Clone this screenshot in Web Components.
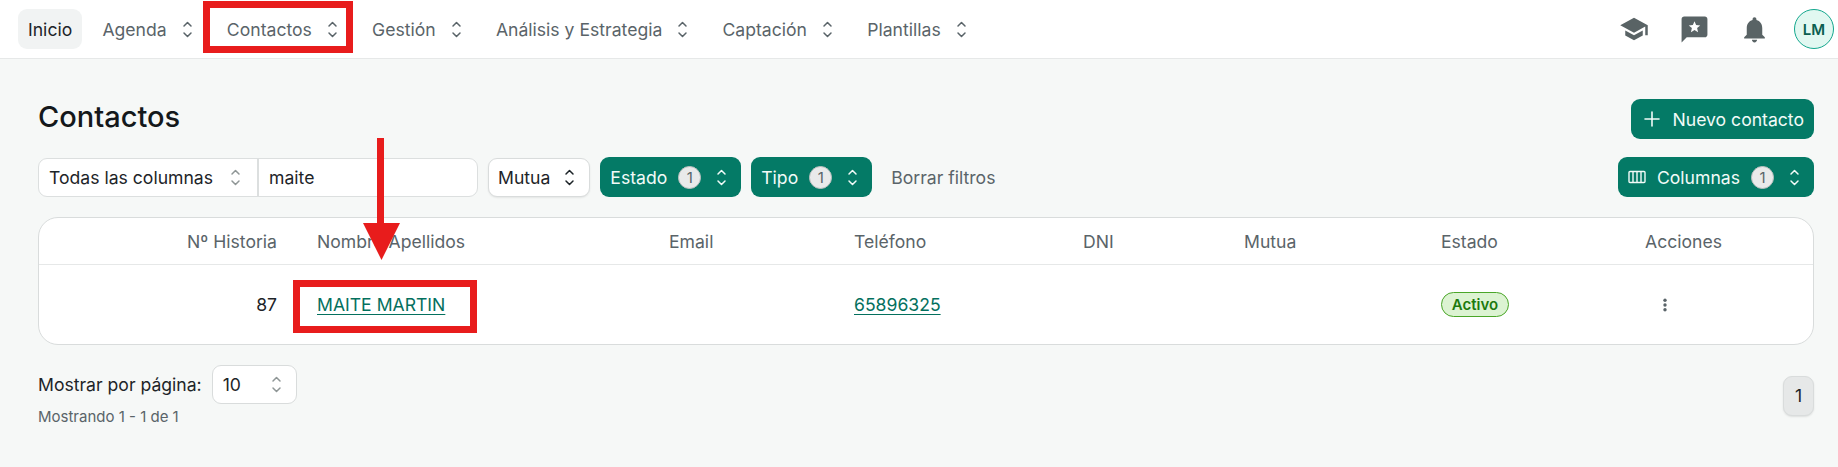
<!DOCTYPE html>
<html lang="es">
<head>
<meta charset="utf-8">
<title>Contactos</title>
<style>
  html, body { margin: 0; height: 100%; }
  body {
    background: #f6f8f7;
    font-family: Inter, "Liberation Sans", sans-serif;
    font-size: 17.6px;
    color: #1d2428;
    position: relative;
    overflow: hidden;
  }
</style>
</head>
<body>
<top-nav></top-nav>
<contacts-page></contacts-page>
<red-marks></red-marks>

<script>
const selector = `<svg class="sel" width="19" height="19" viewBox="0 0 19 19" fill="none" stroke="currentColor" stroke-width="1.5" stroke-linecap="round" stroke-linejoin="round"><path d="M6 6l3.5-3.5L13 6"/><path d="M6 13l3.5 3.5L13 13"/></svg>`

class NavItem extends HTMLElement {
  constructor() {
    super()
    this.shadow = this.attachShadow({ mode: 'open' })
  }
  connectedCallback() {
    const menu = this.hasAttribute('menu')
    this.shadow.innerHTML = /*html*/`
      <style>
        :host {
          display: flex;
          align-items: center;
          height: 40px;
          padding: 0 10px;
          gap: 11px;
          border-radius: 9px;
          color: #5a6469;
          white-space: nowrap;
        }
        :host([active]) { background: #f1f3f3; color: #1d2428; }
        svg { display: block; margin-right: 0; }
      </style>
      <slot></slot>${menu ? selector : ''}`
  }
}
customElements.define('nav-item', NavItem)

class TopNav extends HTMLElement {
  constructor() {
    super()
    this.shadow = this.attachShadow({ mode: 'open' })
  }
  connectedCallback() {
    this.shadow.innerHTML = /*html*/`
      <style>
        :host {
          display: flex;
          align-items: center;
          justify-content: space-between;
          height: 58px;
          padding: 0 4px 0 18px;
          background: #fff;
          border-bottom: 1px solid #e6e8e8;
        }
        .links { display: flex; align-items: center; gap: 10.2px; }
        .tools { display: flex; align-items: center; gap: 20px; }
        .tool {
          width: 40px;
          height: 40px;
          display: flex;
          align-items: center;
          justify-content: center;
          color: #596365;
        }
        .avatar {
          box-sizing: border-box;
          width: 40px;
          height: 40px;
          border-radius: 50%;
          border: 1px solid #12a78d;
          background: #e1f8f1;
          color: #0b5e50;
          font-size: 15px;
          font-weight: 600;
          display: flex;
          align-items: center;
          justify-content: center;
        }
      </style>
      <div class="links">
        <nav-item active>Inicio</nav-item>
        <nav-item menu>Agenda</nav-item>
        <nav-item menu>Contactos</nav-item>
        <nav-item menu>Gestión</nav-item>
        <nav-item menu>Análisis y Estrategia</nav-item>
        <nav-item menu>Captación</nav-item>
        <nav-item menu>Plantillas</nav-item>
      </div>
      <div class="tools">
        <div class="tool"><svg width="30" height="30" viewBox="0 0 24 24" fill="currentColor"><path d="M5 13.18v4L12 21l7-3.82v-4L12 17l-7-3.82zM12 3L1 9l11 6 9-4.91V17h2V9L12 3z"/></svg></div>
        <div class="tool"><svg width="31" height="31" viewBox="0 0 24 24" fill="currentColor"><path d="M20 2H4c-1.1 0-2 .9-2 2v18l4-4h14c1.1 0 2-.9 2-2V4c0-1.1-.9-2-2-2z"/><path fill="#fff" d="M12 5.6l1.25 2.95 3.2.27-2.43 2.1.73 3.13L12 12.4l-2.75 1.65.73-3.13-2.43-2.1 3.2-.27z"/></svg></div>
        <div class="tool"><svg width="31" height="31" viewBox="0 0 24 24" fill="currentColor"><path d="M12 22c1.1 0 2-.9 2-2h-4c0 1.1.9 2 2 2zm6-6v-5c0-3.07-1.63-5.64-4.5-6.32V4c0-.83-.67-1.5-1.5-1.5s-1.5.67-1.5 1.5v.68C7.64 5.36 6 7.92 6 11v5l-2 2v1h16v-1l-2-2z"/></svg></div>
        <div class="avatar">LM</div>
      </div>`
  }
}
customElements.define('top-nav', TopNav)

// filter button, white or green with the count pill
class FilterButton extends HTMLElement {
  constructor() {
    super()
    this.shadow = this.attachShadow({ mode: 'open' })
  }
  connectedCallback() {
    const count = this.getAttribute('count')
    this.shadow.innerHTML = /*html*/`
      <style>
        :host {
          box-sizing: border-box;
          display: flex;
          align-items: center;
          height: 40px;
          padding: 0 10px;
          gap: 11px;
          border-radius: 9px;
          background: #047a66;
          color: #f2fbf8;
          white-space: nowrap;
        }
        :host([plain]) {
          background: #fff;
          color: #1d2428;
          height: 39px;
          padding: 0 10px 0 9px;
          gap: 10px;
          border: 1px solid #d9dcdc;
          box-shadow: 0 1px 2px rgba(0,0,0,.08);
        }
        .count {
          width: 23px;
          height: 23px;
          border-radius: 50%;
          background: #e9eaea;
          border: 1px solid #bdbfbf;
          box-sizing: border-box;
          color: #5a6469;
          font-size: 15px;
          display: flex;
          align-items: center;
          justify-content: center;
        }
        svg { display: block; }
      </style>
      <slot></slot>
      ${count ? `<span class="count">${count}</span>` : ''}
      ${selector}`
  }
}
customElements.define('filter-button', FilterButton)

class SearchBox extends HTMLElement {
  constructor() {
    super()
    this.shadow = this.attachShadow({ mode: 'open' })
  }
  connectedCallback() {
    this.shadow.innerHTML = /*html*/`
      <style>
        :host {
          box-sizing: border-box;
          display: flex;
          width: 440px;
          height: 39px;
          background: #fff;
          border: 1px solid #dcdfdf;
          border-radius: 9px;
        }
        .col {
          box-sizing: border-box;
          width: 220px;
          display: flex;
          align-items: center;
          justify-content: space-between;
          padding: 0 12px 0 10px;
          border-right: 2px solid #dcdfdf;
          white-space: nowrap;
        }
        .col svg { color: #8f9696; display: block; }
        .val { display: flex; align-items: center; padding-left: 10px; }
      </style>
      <div class="col">Todas las columnas ${selector}</div>
      <div class="val">maite</div>`
  }
}
customElements.define('search-box', SearchBox)

class StatusBadge extends HTMLElement {
  constructor() {
    super()
    this.attachShadow({ mode: 'open' }).innerHTML = /*html*/`
      <style>
        :host {
          box-sizing: border-box;
          display: inline-flex;
          align-items: center;
          justify-content: center;
          width: 68px;
          height: 25px;
          border-radius: 13px;
          border: 1px solid #4aa628;
          background: #dcf3d2;
          color: #1c7a0e;
          font-size: 15px;
          font-weight: 600;
        }
      </style>
      <slot></slot>`
  }
}
customElements.define('status-badge', StatusBadge)

class ContactsTable extends HTMLElement {
  constructor() {
    super()
    this.shadow = this.attachShadow({ mode: 'open' })
  }
  connectedCallback() {
    this.shadow.innerHTML = /*html*/`
      <style>
        :host {
          display: block;
          box-sizing: border-box;
          background: #fff;
          border: 1px solid #d9dcdc;
          border-radius: 20px;
          overflow: hidden;
          height: 128px;
        }
        .row {
          display: grid;
          grid-template-columns: 258px 352px 185px 229px 161px 197px 204px 1fr;
          align-items: center;
        }
        .head { height: 47px; box-sizing: border-box; border-bottom: 1px solid #e6e8e8; color: #5a6469; }
        .body { height: 79px; }
        .cell { padding-left: 20px; white-space: nowrap; }
        .num { padding: 0 20px 0 0; text-align: right; }
        a { color: #04705e; text-decoration: underline; text-underline-offset: 3px; text-decoration-thickness: 1px; }
        .dots { display: block; margin-left: 18px; color: #5a6469; }
      </style>
      <div class="row head">
        <div class="cell num">Nº Historia</div>
        <div class="cell">Nombre Apellidos</div>
        <div class="cell">Email</div>
        <div class="cell">Teléfono</div>
        <div class="cell">DNI</div>
        <div class="cell">Mutua</div>
        <div class="cell">Estado</div>
        <div class="cell">Acciones</div>
      </div>
      <div class="row body">
        <div class="cell num">87</div>
        <div class="cell"><a>MAITE MARTIN</a></div>
        <div class="cell"></div>
        <div class="cell"><a>65896325</a></div>
        <div class="cell"></div>
        <div class="cell"></div>
        <div class="cell"><status-badge>Activo</status-badge></div>
        <div class="cell"><svg class="dots" width="4" height="14" viewBox="0 0 4 14" fill="currentColor"><circle cx="2" cy="2.2" r="1.7"/><circle cx="2" cy="7" r="1.7"/><circle cx="2" cy="11.8" r="1.7"/></svg></div>
      </div>`
  }
}
customElements.define('contacts-table', ContactsTable)

class ContactsPage extends HTMLElement {
  constructor() {
    super()
    this.shadow = this.attachShadow({ mode: 'open' })
  }
  connectedCallback() {
    this.shadow.innerHTML = /*html*/`
      <style>
        :host {
          display: block;
          padding: 40px 24px 0 38px;
        }
        .title-row, .filters, .footer { display: flex; align-items: center; }
        .title-row { justify-content: space-between; height: 40px; }
        h1 { margin: 0 0 6px; font-size: 29px; font-weight: 500; color: #14181b; }
        .add {
          display: flex;
          align-items: center;
          gap: 10px;
          height: 40px;
          padding: 0 10px 0 11px;
          border-radius: 9px;
          background: #047a66;
          color: #f2fbf8;
        }
        .filters { margin-top: 18px; gap: 10px; height: 40px; }
        .clear { color: #5a6469; margin-left: 9px; white-space: nowrap; }
        .push { margin-left: auto; }
        .push svg { display: block; }
        .cols { display: flex; align-items: center; gap: 11px; }
        contacts-table { margin-top: 20px; }
        .footer { margin-top: 20px; justify-content: space-between; }
        .per { display: flex; align-items: center; gap: 10px; }
        .size {
          box-sizing: border-box;
          width: 85px;
          height: 39px;
          display: flex;
          align-items: center;
          justify-content: space-between;
          padding: 0 10px;
          background: #fff;
          border: 1px solid #d9dcdc;
          border-radius: 9px;
        }
        .size svg { color: #8f9696; display: block; }
        .info { margin-top: 3px; font-size: 15px; color: #5a6469; }
        .page {
          box-sizing: border-box;
          width: 31px;
          height: 40px;
          display: flex;
          align-items: center;
          justify-content: center;
          background: #e6e8e8;
          border: 1px solid #d9dcdc;
          border-radius: 9px;
          box-shadow: 0 1px 2px rgba(0,0,0,.1);
        }
      </style>
      <div class="title-row">
        <h1>Contactos</h1>
        <div class="add">
          <svg width="20" height="20" viewBox="0 0 20 20" fill="none" stroke="currentColor" stroke-width="1.6" stroke-linecap="round"><path d="M10 3v14M3 10h14"/></svg>
          Nuevo contacto
        </div>
      </div>
      <div class="filters">
        <search-box></search-box>
        <filter-button plain>Mutua</filter-button>
        <filter-button count="1">Estado</filter-button>
        <filter-button count="1">Tipo</filter-button>
        <span class="clear">Borrar filtros</span>
        <filter-button class="push" count="1"><span class="cols">
          <svg width="18" height="14" viewBox="0 0 18 14" fill="none" stroke="currentColor" stroke-width="1.4"><rect x="1" y="1.5" width="16" height="11" rx="1"/><path d="M5 1.5v11M9 1.5v11M13 1.5v11"/></svg>
          Columnas</span></filter-button>
      </div>
      <contacts-table></contacts-table>
      <div class="footer">
        <div>
          <div class="per">Mostrar por página:
            <div class="size">10 ${selector}</div>
          </div>
          <div class="info">Mostrando 1 - 1 de 1</div>
        </div>
        <div class="page">1</div>
      </div>`
  }
}
customElements.define('contacts-page', ContactsPage)

// the red notes drawn over the screenshot
class RedMarks extends HTMLElement {
  constructor() {
    super()
    this.attachShadow({ mode: 'open' }).innerHTML = /*html*/`
      <style>
        :host { position: absolute; inset: 0; pointer-events: none; display: block; }
        svg { display: block; }
      </style>
      <svg width="1838" height="467" fill="none">
        <rect x="206.5" y="4.5" width="143" height="45" stroke="#e81c1c" stroke-width="7"/>
        <rect x="296.5" y="283.5" width="177" height="46" stroke="#e81c1c" stroke-width="7"/>
        <path d="M377 138h7v85h-7z" fill="#e81c1c"/>
        <path d="M363 223h37l-18.500 37z" fill="#e81c1c"/>
      </svg>`
  }
}
customElements.define('red-marks', RedMarks)
</script>
</body>
</html>
